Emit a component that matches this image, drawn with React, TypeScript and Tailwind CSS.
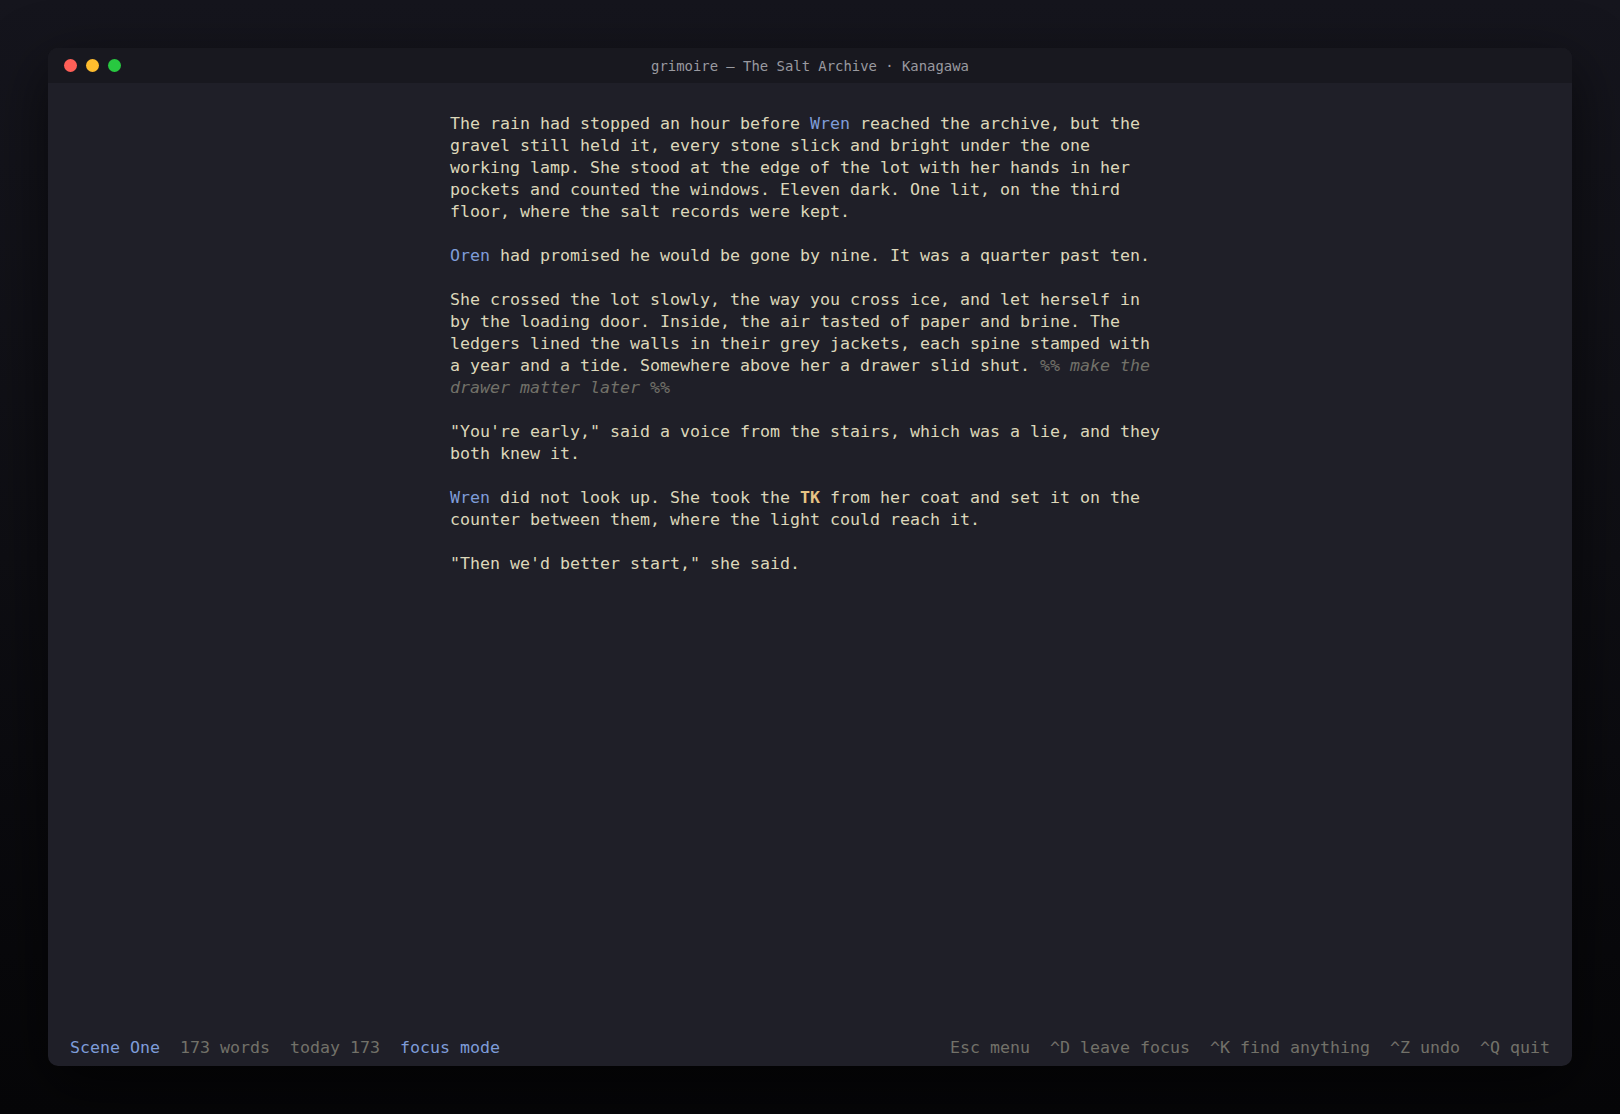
import React from 'react';

const mono = { fontFamily: '"DejaVu Sans Mono", "Liberation Mono", monospace' };

function Name({ children }: { children: React.ReactNode }) {
  return <span className="text-[#7e9cd8]">{children}</span>;
}

export default function App() {
  return (
    <div
      className="h-[1114px] w-full p-12 bg-gradient-to-b from-[#15151d] via-[#0e0e13] to-[#060608]"
      style={mono}
    >
      <div className="h-full flex flex-col rounded-[10px] overflow-hidden bg-[#1f1f28] shadow-[0_20px_60px_rgba(0,0,0,0.6)]">
        {/* title bar */}
        <header className="relative h-[35px] shrink-0 bg-[#18181f] flex items-center px-4">
          <div className="flex items-center gap-[9px]">
            <span className="w-[13px] h-[13px] rounded-full bg-[#ff5f57]" />
            <span className="w-[13px] h-[13px] rounded-full bg-[#febc2e]" />
            <span className="w-[13px] h-[13px] rounded-full bg-[#28c840]" />
          </div>
          <div className="absolute inset-0 pt-[2px] flex items-center justify-center text-[13.9px] text-[#9a9aa0] pointer-events-none">
            grimoire — The Salt Archive · Kanagawa
          </div>
        </header>

        {/* editor */}
        <main className="flex-1 pt-[30px]">
          <div className="w-[720px] mx-auto">
            <div className="w-[715px] text-[16.63px] leading-[22px] text-[#dcd7ba] whitespace-pre-wrap">
              <p>
                The rain had stopped an hour before <Name>Wren</Name> reached the archive, but the gravel still
                held it, every stone slick and bright under the one working lamp. She stood at the edge of the
                lot with her hands in her pockets and counted the windows. Eleven dark. One lit, on the third
                floor, where the salt records were kept.
              </p>
              <p className="mt-[22px]">
                <Name>Oren</Name> had promised he would be gone by nine. It was a quarter past ten.
              </p>
              <p className="mt-[22px]">
                She crossed the lot slowly, the way you cross ice, and let herself in by the loading door.
                Inside, the air tasted of paper and brine. The ledgers lined the walls in their grey jackets,
                each spine stamped with a year and a tide. Somewhere above her a drawer slid shut.{' '}
                <span className="italic text-[#727169]">%% make the drawer matter later %%</span>
              </p>
              <p className="mt-[22px]">
                "You're early," said a voice from the stairs, which was a lie, and they both knew it.
              </p>
              <p className="mt-[22px]">
                <Name>Wren</Name> did not look up. She took the{' '}
                <span className="font-bold text-[#e6c384]">TK</span> from her coat and set it on the counter
                between them, where the light could reach it.
              </p>
              <p className="mt-[22px]">"Then we'd better start," she said.</p>
            </div>
          </div>
        </main>

        {/* status bar */}
        <footer className="shrink-0 flex items-center justify-between px-[22px] pb-[7px] text-[16.63px] leading-[22px] whitespace-pre">
          <div>
            <span className="text-[#7e9cd8]">Scene One</span>
            <span className="text-[#727169]">{'  173 words  today 173  '}</span>
            <span className="text-[#7e9cd8]">focus mode</span>
          </div>
          <div className="text-[#727169]">
            {'Esc menu  ^D leave focus  ^K find anything  ^Z undo  ^Q quit'}
          </div>
        </footer>
      </div>
    </div>
  );
}
